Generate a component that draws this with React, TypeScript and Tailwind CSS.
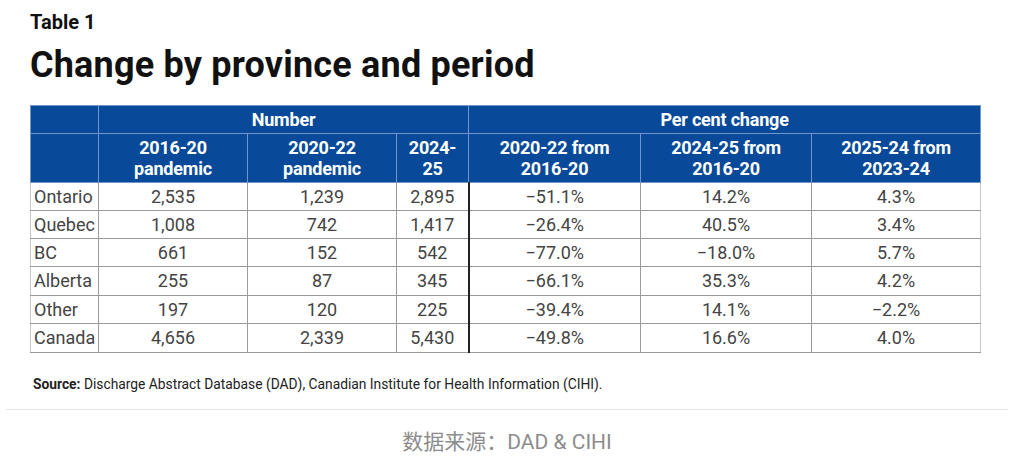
import React from 'react';

type Row = { name: string; v: string[]; h: string };

const rows: Row[] = [
  { name: 'Ontario', v: ['2,535', '1,239', '2,895', '\u221251.1%', '14.2%', '4.3%'], h: 'h-[28px]' },
  { name: 'Quebec', v: ['1,008', '742', '1,417', '\u221226.4%', '40.5%', '3.4%'], h: 'h-[28px]' },
  { name: 'BC', v: ['661', '152', '542', '\u221277.0%', '\u221218.0%', '5.7%'], h: 'h-[28px]' },
  { name: 'Alberta', v: ['255', '87', '345', '\u221266.1%', '35.3%', '4.2%'], h: 'h-[29px]' },
  { name: 'Other', v: ['197', '120', '225', '\u221239.4%', '14.1%', '\u22122.2%'], h: 'h-[28px]' },
  { name: 'Canada', v: ['4,656', '2,339', '5,430', '\u221249.8%', '16.6%', '4.0%'], h: 'h-[29px]' },
];

const th = 'border border-[#7196cb] bg-[#084a99] text-white font-bold text-[18px] leading-[21px] tracking-[-0.2px] text-center p-0';
const td = 'border border-[#9a9a9a] text-[18px] text-[#444] text-center p-0 leading-none';

export default function App() {
  return (
    <div className="w-[1014px] h-[462px] bg-white font-['Roboto',sans-serif] overflow-hidden">
      <div className="px-[30px] pt-[10px]">
        <div className="text-[20px] leading-[25px] font-bold text-[#111]">Table 1</div>
        <h1 className="mt-[8px] text-[36px] leading-[44px] font-bold text-[#111] tracking-[0.2px]">
          Change by province and period
        </h1>

        <table className="mt-[18px] w-[950px] table-fixed border-collapse">
          <colgroup>
            <col className="w-[68px]" />
            <col className="w-[149px]" />
            <col className="w-[149px]" />
            <col className="w-[72px]" />
            <col className="w-[172px]" />
            <col className="w-[171px]" />
            <col className="w-[169px]" />
          </colgroup>
          <thead>
            <tr className="h-[28px]">
              <th className={th}></th>
              <th className={th} colSpan={3}>Number</th>
              <th className={th} colSpan={3}>Per cent change</th>
            </tr>
            <tr className="h-[49px]">
              <th className={th}></th>
              <th className={th}>2016-20<br />pandemic</th>
              <th className={th}>2020-22<br />pandemic</th>
              <th className={th}>2024-<br />25</th>
              <th className={th}>2020-22 from<br />2016-20</th>
              <th className={th}>2024-25 from<br />2016-20</th>
              <th className={th}>2025-24 from<br />2023-24</th>
            </tr>
          </thead>
          <tbody>
            {rows.map((r) => (
              <tr key={r.name} className={r.h}>
                <td className={`${td} text-left pl-[3px] border-l-[#c8c8c8]`}>{r.name}</td>
                <td className={td}>{r.v[0]}</td>
                <td className={td}>{r.v[1]}</td>
                <td className={`${td} border-r-2 border-r-[#222]`}>{r.v[2]}</td>
                <td className={td}>{r.v[3]}</td>
                <td className={td}>{r.v[4]}</td>
                <td className={`${td} border-r-[#c8c8c8]`}>{r.v[5]}</td>
              </tr>
            ))}
          </tbody>
        </table>

        <p className="mt-[23px] pl-[3px] text-[13.8px] leading-[17px] text-[#222]">
          <span className="font-bold">Source:</span> Discharge Abstract Database (DAD), Canadian Institute for Health Information (CIHI).
        </p>
      </div>

      <div className="mx-[6px] mt-[16px] border-t border-[#e6e6e6]" />

      <p className="mt-[19px] text-center text-[21px] leading-[26px] text-[#8c8c8c] font-['Roboto','Noto_Sans_CJK_SC',sans-serif]">
        数据来源：DAD &amp; CIHI
      </p>
    </div>
  );
}
